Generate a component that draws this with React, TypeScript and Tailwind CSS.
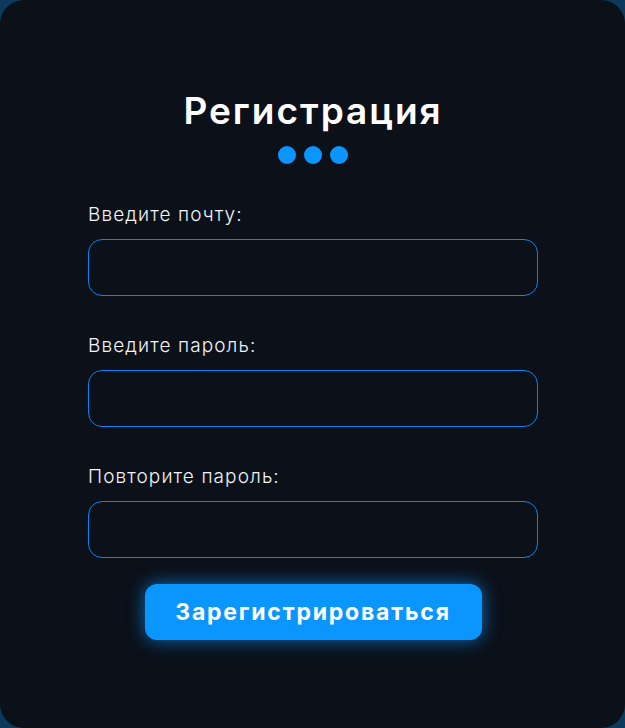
import React from 'react';

const Field = ({ label, type }: { label: string; type: string }) => (
  <div className="flex flex-col">
    <label className="text-[19px] font-light leading-[22px] tracking-[1.1px] text-[#f1f3f6] mb-[13px]">{label}</label>
    <input
      type={type}
      className="h-[57px] w-full rounded-[14px] border border-[#0a84f0] bg-transparent px-4 text-white outline-none"
    />
  </div>
);

export default function App() {
  return (
    <div className="min-h-[728px] w-full bg-[#0b3a5c]" style={{ fontFamily: 'Inter, "Noto Sans", sans-serif' }}>
      <div className="flex h-[728px] w-full flex-col rounded-[24px] bg-[#0b1019] pl-[88px] pr-[87px] pt-[88px]">
        <h1 className="text-center text-[37px] font-semibold leading-[46px] tracking-[2px] text-white">Регистрация</h1>
        <div className="mt-[12px] flex justify-center gap-[8px]">
          <span className="h-[18px] w-[18px] rounded-full bg-[#0a95ff]" />
          <span className="h-[18px] w-[18px] rounded-full bg-[#0a95ff]" />
          <span className="h-[18px] w-[18px] rounded-full bg-[#0a95ff]" />
        </div>
        <form className="mt-[40px] flex flex-col gap-[39px]" onSubmit={(e) => e.preventDefault()}>
          <Field label="Введите почту:" type="email" />
          <Field label="Введите пароль:" type="password" />
          <Field label="Повторите пароль:" type="password" />
        </form>
        <div className="mt-[26px] flex justify-center">
          <button className="h-[56px] w-[337px] rounded-[12px] bg-[#0a95ff] text-[23px] font-bold tracking-[1.8px] text-white shadow-[0_0_18px_rgba(10,149,255,0.7)]">
            Зарегистрироваться
          </button>
        </div>
      </div>
    </div>
  );
}
